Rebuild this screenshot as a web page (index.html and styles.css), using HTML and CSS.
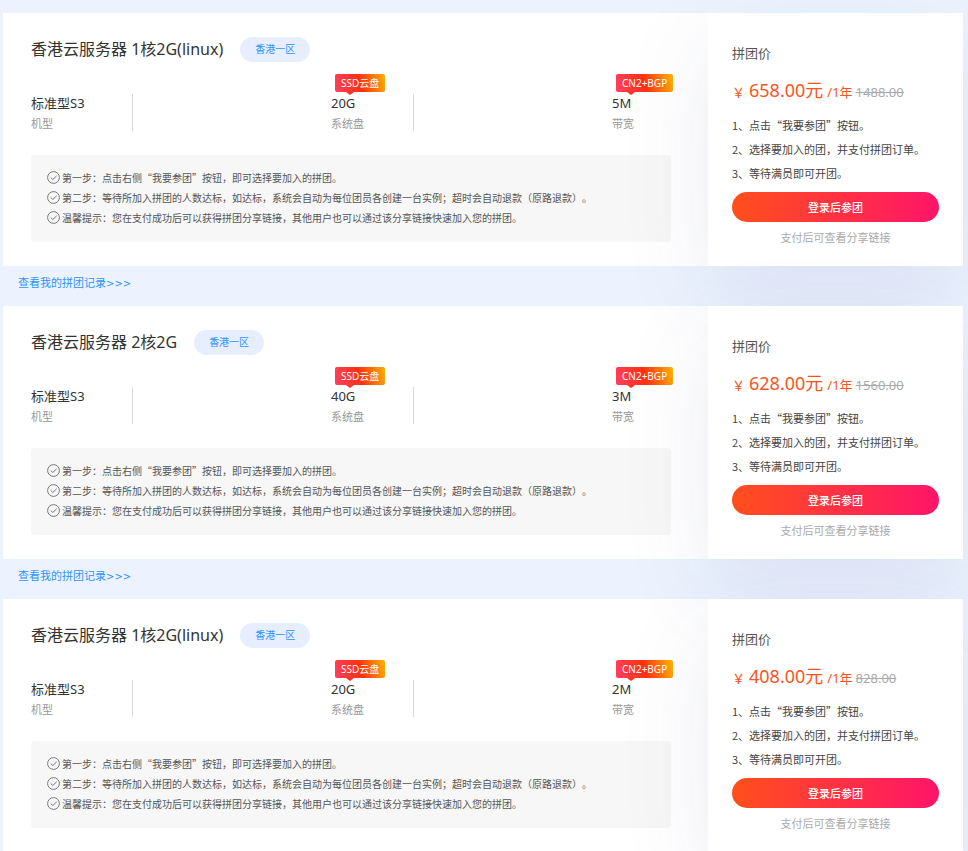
FILE: index.html
```html
<!DOCTYPE html>
<html lang="zh-CN">
<head>
<meta charset="utf-8">
<meta name="viewport" content="width=device-width, initial-scale=1">
<title>云服务器拼团</title>
<link rel="stylesheet" href="styles.css">
</head>
<body>
<svg class="defs" aria-hidden="true">
  <symbol id="check" viewBox="0 0 13 13"><circle cx="6.5" cy="6.5" r="5.9"/><path d="M3.7 6.5l2.1 2 3.9-3.7"/></symbol>
</svg>
<main class="page">
  <article class="card">
    <section class="main">
      <header class="head"><h2>香港云服务器 1核2G(linux)</h2><span class="zone">香港一区</span></header>
      <ul class="specs">
        <li><strong>标准型S3</strong><span>机型</span></li>
        <li><em class="badge">SSD云盘</em><strong>20G</strong><span>系统盘</span></li>
        <li><em class="badge">CN2+BGP</em><strong>5M</strong><span>带宽</span></li>
      </ul>
      <ul class="notes">
        <li><svg><use href="#check"/></svg>第一步：点击右侧“我要参团”按钮，即可选择要加入的拼团。</li>
        <li><svg><use href="#check"/></svg>第二步：等待所加入拼团的人数达标，如达标，系统会自动为每位团员各创建一台实例；超时会自动退款（原路退款）。</li>
        <li><svg><use href="#check"/></svg>温馨提示：您在支付成功后可以获得拼团分享链接，其他用户也可以通过该分享链接快速加入您的拼团。</li>
      </ul>
    </section>
    <aside class="offer">
      <h3>拼团价</h3>
      <p class="price"><span>￥</span><b>658.00元</b><span>/1年</span><s>1488.00</s></p>
      <ol><li>1、点击“我要参团”按钮。</li><li>2、选择要加入的团，并支付拼团订单。</li><li>3、等待满员即可开团。</li></ol>
      <button type="button">登录后参团</button>
      <p class="hint">支付后可查看分享链接</p>
    </aside>
  </article>
  <a class="records" href="#records">查看我的拼团记录<span class="arrows">&gt;&gt;&gt;</span></a>

  <article class="card">
    <section class="main">
      <header class="head"><h2>香港云服务器 2核2G</h2><span class="zone">香港一区</span></header>
      <ul class="specs">
        <li><strong>标准型S3</strong><span>机型</span></li>
        <li><em class="badge">SSD云盘</em><strong>40G</strong><span>系统盘</span></li>
        <li><em class="badge">CN2+BGP</em><strong>3M</strong><span>带宽</span></li>
      </ul>
      <ul class="notes">
        <li><svg><use href="#check"/></svg>第一步：点击右侧“我要参团”按钮，即可选择要加入的拼团。</li>
        <li><svg><use href="#check"/></svg>第二步：等待所加入拼团的人数达标，如达标，系统会自动为每位团员各创建一台实例；超时会自动退款（原路退款）。</li>
        <li><svg><use href="#check"/></svg>温馨提示：您在支付成功后可以获得拼团分享链接，其他用户也可以通过该分享链接快速加入您的拼团。</li>
      </ul>
    </section>
    <aside class="offer">
      <h3>拼团价</h3>
      <p class="price"><span>￥</span><b>628.00元</b><span>/1年</span><s>1560.00</s></p>
      <ol><li>1、点击“我要参团”按钮。</li><li>2、选择要加入的团，并支付拼团订单。</li><li>3、等待满员即可开团。</li></ol>
      <button type="button">登录后参团</button>
      <p class="hint">支付后可查看分享链接</p>
    </aside>
  </article>
  <a class="records" href="#records">查看我的拼团记录<span class="arrows">&gt;&gt;&gt;</span></a>

  <article class="card">
    <section class="main">
      <header class="head"><h2>香港云服务器 1核2G(linux)</h2><span class="zone">香港一区</span></header>
      <ul class="specs">
        <li><strong>标准型S3</strong><span>机型</span></li>
        <li><em class="badge">SSD云盘</em><strong>20G</strong><span>系统盘</span></li>
        <li><em class="badge">CN2+BGP</em><strong>2M</strong><span>带宽</span></li>
      </ul>
      <ul class="notes">
        <li><svg><use href="#check"/></svg>第一步：点击右侧“我要参团”按钮，即可选择要加入的拼团。</li>
        <li><svg><use href="#check"/></svg>第二步：等待所加入拼团的人数达标，如达标，系统会自动为每位团员各创建一台实例；超时会自动退款（原路退款）。</li>
        <li><svg><use href="#check"/></svg>温馨提示：您在支付成功后可以获得拼团分享链接，其他用户也可以通过该分享链接快速加入您的拼团。</li>
      </ul>
    </section>
    <aside class="offer">
      <h3>拼团价</h3>
      <p class="price"><span>￥</span><b>408.00元</b><span>/1年</span><s>828.00</s></p>
      <ol><li>1、点击“我要参团”按钮。</li><li>2、选择要加入的团，并支付拼团订单。</li><li>3、等待满员即可开团。</li></ol>
      <button type="button">登录后参团</button>
      <p class="hint">支付后可查看分享链接</p>
    </aside>
  </article>
</main>
</body>
</html>
```

FILE: styles.css
```css
* { box-sizing: border-box; margin: 0; padding: 0; }
body {
  background: #ecf3fe;
  color: #333;
  font-family: "Noto Sans", "Noto Sans CJK SC", sans-serif;
  overflow-x: hidden;
}
ul, ol { list-style: none; }
h2, h3, b, strong { font-weight: 400; }
em { font-style: normal; }
.defs { display: none; }
.page { padding: 13px 5px 0 3px; }

.card { display: flex; background: #fff; }
.main { flex: 1; min-width: 0; padding: 24px 13px 24px 28px; }
.head { display: flex; align-items: center; gap: 17px; height: 25px; }
.head h2 { font-size: 16px; line-height: 25px; }
.zone {
  padding: 0 15px;
  border-radius: 13px;
  background: #e6eeff;
  color: #2e93ff;
  font-size: 10px;
  line-height: 25px;
}

.specs { display: flex; justify-content: space-between; margin-top: 32px; }
.specs li {
  position: relative;
  display: flex;
  flex-direction: column;
  justify-content: space-between;
  width: 102px;
  height: 37px;
  padding-left: 19px;
  border-right: 1px solid #d9d9d9;
}
.specs li:first-child { padding-left: 0; }
.specs li:last-child { border-right: 0; }
.specs strong { font-size: 13px; line-height: 18px; }
.specs span { color: #999; font-size: 11px; line-height: 14px; }
.badge {
  position: absolute;
  left: 23px;
  bottom: 39px;
  padding: 0 6px;
  border-radius: 2px;
  background: linear-gradient(75deg, #ff3f62, #ff3010 50%, #ffb400);
  color: #fff;
  font-size: 10px;
  line-height: 18px;
  white-space: nowrap;
}
.badge::after {
  content: "";
  position: absolute;
  top: 100%;
  left: 11px;
  border: 4px solid transparent;
  border-top: 3px solid #ff3020;
  border-bottom: 0;
}

.notes {
  margin: 24px 24px 0 0;
  padding: 13px 16px 14px;
  border-radius: 4px;
  background: #f7f7f7;
}
.notes, .offer ol {
  font-family: "Noto Sans CJK SC", sans-serif;
  text-spacing-trim: space-all;
}
.notes li {
  display: flex;
  align-items: center;
  gap: 2px;
  color: #555;
  font-size: 10px;
  line-height: 20px;
}
.notes svg { width: 13px; height: 13px; margin-bottom: 2px; fill: none; stroke: #777; stroke-width: 1; }

.offer {
  width: 255px;
  padding: 30px 24px 20px;
  background: #fff;
  box-shadow: 0 30px 90px rgba(65, 75, 145, 0.1);
}
.offer h3 { color: #555; font-size: 13px; line-height: 20px; }
.price {
  display: flex;
  align-items: baseline;
  height: 30px;
  margin-top: 12px;
  color: #f9551f;
  font-size: 13px;
  line-height: 30px;
  white-space: nowrap;
}
.price b { margin: 0 4px; font-size: 18px; }
.price s { margin-left: 3px; color: #aaa; }
.offer ol { margin-top: 8px; color: #444; font-size: 11px; line-height: 24px; white-space: nowrap; }
.offer button {
  display: block;
  width: 100%;
  height: 30px;
  margin-top: 7px;
  border: 0;
  border-radius: 15px;
  background: linear-gradient(90deg, #ff4f1c, #ff1569);
  color: #fff;
  font-family: inherit;
  font-size: 11px;
  font-weight: 500;
}
.hint { margin-top: 8px; color: #aaa; font-size: 11px; line-height: 16px; text-align: center; }

.records {
  display: block;
  width: fit-content;
  height: 20px;
  margin: 7px 0 13px 15px;
  color: #2e93ff;
  font-size: 11px;
  line-height: 20px;
  text-decoration: none;
}
.arrows { font-family: "DejaVu Sans", sans-serif; font-size: 10px; line-height: 1; }
```
